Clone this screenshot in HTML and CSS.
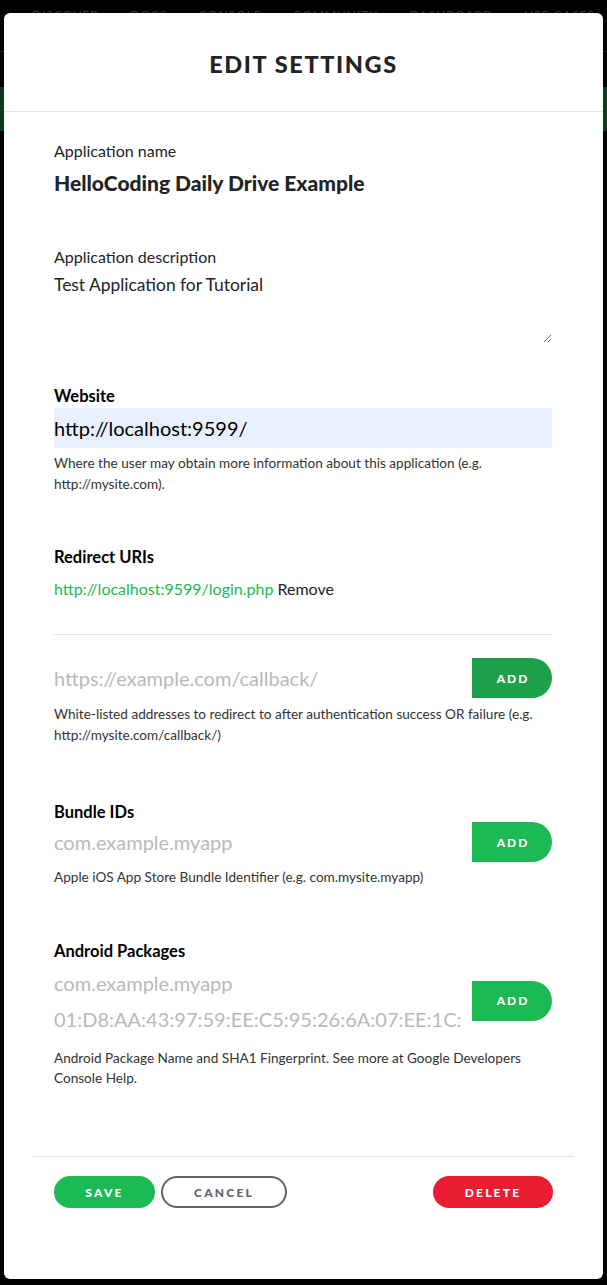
FILE: index.html
```html
<!DOCTYPE html>
<html lang="en">
<head>
<meta charset="utf-8">
<title>Edit Settings</title>
<link rel="stylesheet" href="styles.css">
</head>
<body>
<div class="backdrop">
  <nav class="bg-nav">
    <span>DISCOVER</span><span>DOCS</span><span>CONSOLE</span><span>COMMUNITY</span><span>DASHBOARD</span><span>USE CASES</span>
  </nav>
  <div class="bg-band"></div>
</div>

<div class="modal">
  <header class="modal-header">
    <h1 class="modal-title">EDIT SETTINGS</h1>
  </header>

  <div class="modal-body">
    <section class="group">
      <div class="label">Application name</div>
      <div class="app-name">HelloCoding Daily Drive Example</div>
    </section>

    <section class="group group-desc">
      <div class="label">Application description</div>
      <textarea class="desc">Test Application for Tutorial</textarea>
    </section>

    <section class="group group-web">
      <div class="label label-bold">Website</div>
      <input class="field field-filled" type="text" value="http://localhost:9599/">
      <p class="help">Where the user may obtain more information about this application (e.g. http://mysite.com).</p>
    </section>

    <section class="group group-redirect">
      <div class="label label-bold">Redirect URIs</div>
      <div class="uri-row"><a class="uri-link">http://localhost:9599/login.php</a> <span class="remove">Remove</span></div>
      <hr class="sep">
      <div class="add-row">
        <div class="fields"><input class="field" type="text" placeholder="https://example.com/callback/"></div>
        <button class="add add-active">ADD</button>
      </div>
      <p class="help help-redirect">White-listed addresses to redirect to after authentication success OR failure (e.g. http://mysite.com/callback/)</p>
    </section>

    <section class="group group-bundle">
      <div class="label label-bold">Bundle IDs</div>
      <div class="add-row add-row-bundle">
        <div class="fields"><input class="field" type="text" placeholder="com.example.myapp"></div>
        <button class="add">ADD</button>
      </div>
      <p class="help help-bundle">Apple iOS App Store Bundle Identifier (e.g. com.mysite.myapp)</p>
    </section>

    <section class="group group-android">
      <div class="label label-bold">Android Packages</div>
      <div class="add-row add-row-android">
        <div class="fields">
          <input class="field field-short" type="text" placeholder="com.example.myapp">
          <input class="field field-short" type="text" placeholder="01:D8:AA:43:97:59:EE:C5:95:26:6A:07:EE:1C:">
        </div>
        <button class="add">ADD</button>
      </div>
      <p class="help help-android">Android Package Name and SHA1 Fingerprint. See more at Google Developers Console Help.</p>
    </section>
  </div>

  <footer class="modal-footer">
    <div class="footer-left">
      <button class="btn btn-save">SAVE</button>
      <button class="btn btn-cancel">CANCEL</button>
    </div>
    <button class="btn btn-delete">DELETE</button>
  </footer>
</div>
</body>
</html>
```

FILE: styles.css
```css
* { box-sizing: border-box; }

html, body {
  margin: 0;
  padding: 0;
  width: 607px;
  height: 1285px;
  background: #000;
  overflow: hidden;
  font-family: Lato, "Liberation Sans", sans-serif;
}

.backdrop {
  width: 607px;
  height: 1285px;
}

.bg-nav {
  display: flex;
  justify-content: space-between;
  padding: 7px 12px 0 32px;
  height: 52px;
  border-bottom: 1px solid #1c1c1c;
  color: #3a3a3a;
  font-size: 12px;
  letter-spacing: 1px;
}

.bg-band {
  margin-top: 35px;
  height: 44px;
  background: #0c3a1c;
}

.modal {
  position: absolute;
  left: 4px;
  top: 13px;
  width: 599px;
  height: 1266px;
  background: #fff;
  border-radius: 6px;
  display: flex;
  flex-direction: column;
  color: #222326;
}

.modal-header {
  height: 99px;
  border-bottom: 1px solid #e4e4e4;
  display: flex;
  align-items: center;
  justify-content: center;
}

.modal-title {
  margin: 0;
  font-size: 23.5px;
  font-weight: 900;
  letter-spacing: 1.6px;
  color: #222326;
  padding-top: 3px;
}

.modal-body {
  padding: 29px 51px 0 50px;
}

.group { display: flex; flex-direction: column; }

.label {
  font-size: 16px;
  line-height: 20px;
  color: #222326;
}
.label-bold { font-weight: 700; color: #000; font-size: 16.5px; }

.app-name {
  margin-top: 10px;
  font-size: 21px;
  line-height: 24px;
  font-weight: 900;
  color: #222326;
}

.group-desc { margin-top: 52px; }

.desc {
  margin-top: 6px;
  height: 70px;
  width: 498px;
  border: none;
  outline: none;
  padding: 0;
  font-family: inherit;
  font-size: 17.4px;
  line-height: 24px;
  color: #222326;
  background: #fff;
  resize: vertical;
}

.group-web { margin-top: 43px; }

.field {
  display: block;
  width: 100%;
  height: 40px;
  border: none;
  outline: none;
  padding: 0;
  font-family: inherit;
  font-size: 20px;
  color: #222326;
  background: transparent;
}
.field::placeholder { color: #b9b9b9; }
.field-filled {
  margin-top: 2px;
  background: #e8f0fe;
  color: #000;
}

.help {
  margin: 5px 0 0;
  font-size: 13.6px;
  line-height: 20.5px;
  color: #333;
}

.group-redirect { margin-top: 53px; }

.uri-row {
  margin-top: 12px;
  font-size: 16px;
  line-height: 20px;
}
.uri-link { color: #1db954; text-decoration: none; }
.remove { color: #222326; }

.sep {
  margin: 35px 0 0;
  border: none;
  border-top: 1px solid #e6e6e6;
  height: 0;
}

.add-row {
  margin-top: 23px;
  display: flex;
  align-items: center;
}
.fields { flex: 1; display: flex; flex-direction: column; }

.add {
  width: 80px;
  height: 40px;
  border: none;
  border-radius: 0 20px 20px 0;
  background: #1db954;
  color: #fff;
  font-family: inherit;
  font-weight: 900;
  font-size: 12px;
  letter-spacing: 2px;
  padding: 0 0 0 2px;
}
.add-active { background: #1ea14a; }

.help-redirect { margin-top: 6px; }

.group-bundle { margin-top: 57px; }
.add-row-bundle { margin-top: 0; }
.help-bundle { margin-top: 5px; }

.group-android { margin-top: 53px; }
.add-row-android { margin-top: 4px; }
.field-short { height: 36px; }
.help-android { margin-top: 11px; }

.modal-footer {
  margin: auto 29px 0;
  border-top: 1px solid #e2e2e2;
  padding: 19px 21px 71px;
  display: flex;
  justify-content: space-between;
  align-items: center;
}
.footer-left { display: flex; gap: 6px; }

.btn {
  height: 32px;
  border-radius: 16px;
  border: none;
  font-family: inherit;
  font-weight: 900;
  font-size: 12px;
  letter-spacing: 2.2px;
  color: #fff;
  padding: 0;
}
.btn-save { width: 101px; background: #1db954; }
.btn-cancel {
  width: 126px;
  background: #fff;
  border: 2px solid #616467;
  color: #616467;
}
.btn-delete { width: 120px; background: #e91e35; }
```
